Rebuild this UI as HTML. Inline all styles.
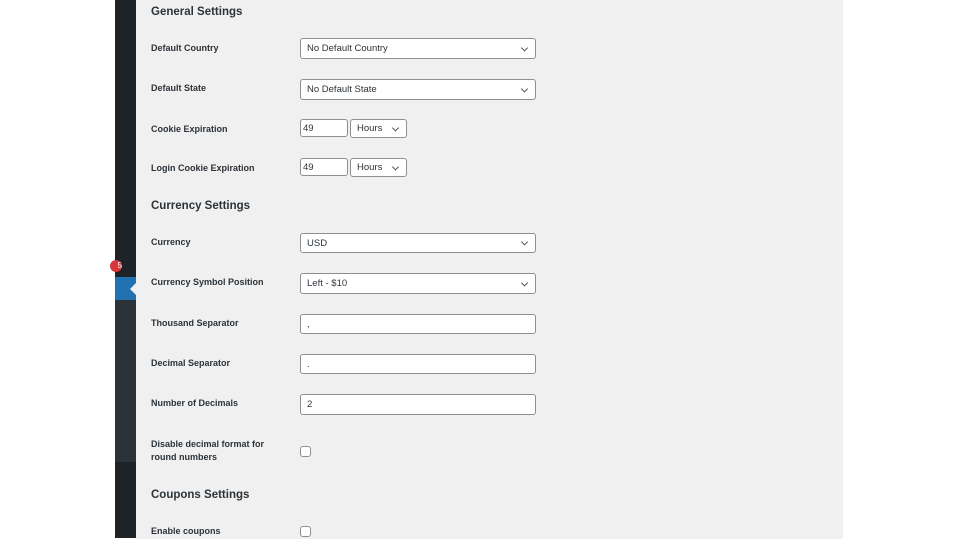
<!DOCTYPE html>
<html><head><style>
body{margin:0;width:960px;height:540px;background:#fff;position:relative;overflow:hidden;font-family:"Liberation Sans",sans-serif;}
.abs{position:absolute}
#main{left:136px;top:0;width:707px;height:539px;background:#f0f0f1}
.sb{left:115px;width:21px}
.h{left:151px;font-size:11.5px;font-weight:bold;color:#2c3338;}
.l{left:151px;font-size:9px;font-weight:bold;color:#2c3338;line-height:13px}
.f{background:#fff;border:1px solid #8c8f94;border-radius:3px;box-sizing:border-box;font-size:9.5px;color:#2c3338;padding-left:6px;display:flex;align-items:center}
.sel::after{content:"";position:absolute;right:8px;top:50%;width:4px;height:4px;border-right:1.2px solid #50575e;border-bottom:1.2px solid #50575e;transform:translateY(-70%) rotate(45deg)}
.cb{width:11px;height:11px;border:1px solid #8c8f94;border-radius:3px;background:#fff;box-sizing:border-box;left:300px}
</style></head><body>
<div class="abs sb" style="top:0;height:300px;background:#1d2327"></div>
<div class="abs sb" style="top:300px;height:162px;background:#2c3338"></div>
<div class="abs sb" style="top:462px;height:76px;background:#1d2327"></div>
<div class="abs sb" style="top:277px;height:23px;background:#2271b1"></div>
<div class="abs" style="left:110px;top:260px;width:12px;height:12px;border-radius:6px;background:#d63638;color:#fff;font-size:8px;line-height:12px;text-align:right;overflow:hidden">5</div>
<div class="abs" id="main"></div>
<div class="abs" style="left:130px;top:283px;width:0;height:0;border-top:6px solid transparent;border-bottom:6px solid transparent;border-right:6px solid #f0f0f1"></div>

<div class="abs h" style="top:6px">General Settings</div>
<div class="abs l" style="top:42px">Default Country</div>
<div class="abs f sel" style="left:300px;top:38px;width:236px;height:21px">No Default Country</div>
<div class="abs l" style="top:82px">Default State</div>
<div class="abs f sel" style="left:300px;top:79px;width:236px;height:21px">No Default State</div>
<div class="abs l" style="top:123px">Cookie Expiration</div>
<div class="abs f" style="left:300px;top:119px;width:48px;height:18px;padding-left:2px">49</div>
<div class="abs f sel" style="left:350px;top:119px;width:57px;height:19px">Hours</div>
<div class="abs l" style="top:162px">Login Cookie Expiration</div>
<div class="abs f" style="left:300px;top:158px;width:48px;height:18px;padding-left:2px">49</div>
<div class="abs f sel" style="left:350px;top:158px;width:57px;height:19px">Hours</div>

<div class="abs h" style="top:200px">Currency Settings</div>
<div class="abs l" style="top:236px">Currency</div>
<div class="abs f sel" style="left:300px;top:233px;width:236px;height:20px">USD</div>
<div class="abs l" style="top:276px">Currency Symbol Position</div>
<div class="abs f sel" style="left:300px;top:273px;width:236px;height:21px">Left - $10</div>
<div class="abs l" style="top:317px">Thousand Separator</div>
<div class="abs f" style="left:300px;top:314px;width:236px;height:20px">,</div>
<div class="abs l" style="top:357px">Decimal Separator</div>
<div class="abs f" style="left:300px;top:354px;width:236px;height:20px">.</div>
<div class="abs l" style="top:397px">Number of Decimals</div>
<div class="abs f" style="left:300px;top:394px;width:236px;height:21px">2</div>
<div class="abs l" style="top:438px">Disable decimal format for<br>round numbers</div>
<div class="abs cb" style="top:446px"></div>

<div class="abs h" style="top:489px">Coupons Settings</div>
<div class="abs l" style="top:525px">Enable coupons</div>
<div class="abs cb" style="top:526px"></div>
</body></html>
